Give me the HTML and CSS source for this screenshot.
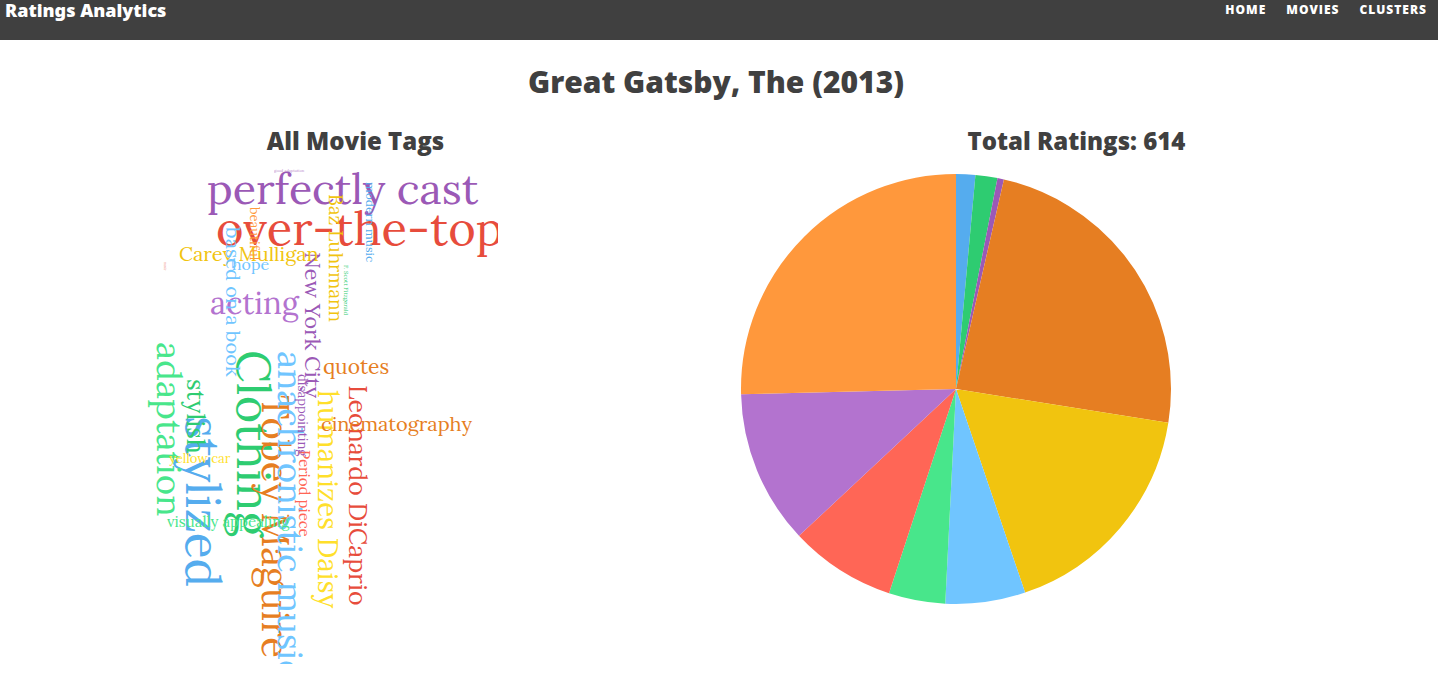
FILE: index.html
```html
<!DOCTYPE html>
<html lang="en">
<head>
<meta charset="utf-8">
<title>Ratings Analytics</title>
<link rel="stylesheet" href="styles.css">
</head>
<body>
<header class="topbar">
  <a class="brand" href="#">Ratings Analytics</a>
  <nav class="nav">
    <a href="#">HOME</a>
    <a href="#">MOVIES</a>
    <a href="#">CLUSTERS</a>
  </nav>
</header>
<main class="page">
  <h1 class="movie-title">Great Gatsby, The (2013)</h1>
  <div class="panels">
    <section class="panel">
      <h2 class="panel-title">All Movie Tags</h2>
      <svg class="cloud" width="358" height="500" viewBox="140 164 358 500">
        <text class="purple" x="207" y="204" font-size="43">perfectly cast</text>
        <text class="red" x="216" y="245" font-size="47">over-the-top</text>
        <text class="green" transform="translate(237 350) rotate(90)" font-size="47">Clothing</text>
        <text class="blue" transform="translate(186 416) rotate(90)" font-size="48">stylized</text>
        <text class="orange" transform="translate(262 395) rotate(90)" font-size="38">Tobey Maguire</text>
        <text class="sky" transform="translate(278 351) rotate(90)" font-size="35">anachronistic music</text>
        <text class="mint" transform="translate(157 342) rotate(90)" font-size="35">adaptation</text>
        <text class="lilac" x="210" y="314" font-size="31">acting</text>
        <text class="yellow" transform="translate(318 390) rotate(90)" font-size="28">humanizes Daisy</text>
        <text class="red" transform="translate(349 385) rotate(90)" font-size="25">Leonardo DiCaprio</text>
        <text class="green" transform="translate(187 379) rotate(90)" font-size="25">stylish</text>
        <text class="orange" x="323" y="374" font-size="21">quotes</text>
        <text class="purple" transform="translate(305 252) rotate(90)" font-size="22">New York City</text>
        <text class="orange" x="321" y="431" font-size="20">cinematography</text>
        <text class="gold" x="179" y="261" font-size="20">Carey Mulligan</text>
        <text class="gold" transform="translate(329 194) rotate(90)" font-size="19">Baz Luhrmann</text>
        <text class="tangerine" transform="translate(250 207) rotate(90)" font-size="13">beautiful</text>
        <text class="sky" x="232" y="270" font-size="16">hope</text>
        <text class="sky" transform="translate(226 227) rotate(90)" font-size="20">based on a book</text>
        <text class="coral" transform="translate(299 450) rotate(90)" font-size="15">Period piece</text>
        <text class="mint" x="167" y="527" font-size="15">visually appealing</text>
        <text class="purple" transform="translate(298 374) rotate(90)" font-size="13">disappointing</text>
        <text class="yellow" x="169" y="463" font-size="13">yellow car</text>
        <text class="blue" transform="translate(366 182) rotate(90)" font-size="12">modern music</text>
        <text class="green" transform="translate(344 265) rotate(90)" font-size="6">F. Scott Fitzgerald</text>
        <text class="purple faint" x="274" y="172" font-size="4">good adaptation</text>
        <text class="red faint" transform="translate(164 262) rotate(90)" font-size="3">music</text>
      </svg>
    </section>
    <section class="panel">
      <h2 class="panel-title">Total Ratings: 614</h2>
      <svg class="pie" width="430" height="430" viewBox="0 0 430 430">
        <g class="slices" transform="rotate(-90 215 215)">
          <circle class="s-blue" cx="215" cy="215" r="107.5" pathLength="614" stroke-dasharray="9 605" stroke-dashoffset="0"/>
          <circle class="s-green" cx="215" cy="215" r="107.5" pathLength="614" stroke-dasharray="10 604" stroke-dashoffset="-9"/>
          <circle class="s-purple" cx="215" cy="215" r="107.5" pathLength="614" stroke-dasharray="3 611" stroke-dashoffset="-19"/>
          <circle class="s-orange" cx="215" cy="215" r="107.5" pathLength="614" stroke-dasharray="147 467" stroke-dashoffset="-22"/>
          <circle class="s-gold" cx="215" cy="215" r="107.5" pathLength="614" stroke-dasharray="106 508" stroke-dashoffset="-169"/>
          <circle class="s-sky" cx="215" cy="215" r="107.5" pathLength="614" stroke-dasharray="37 577" stroke-dashoffset="-275"/>
          <circle class="s-mint" cx="215" cy="215" r="107.5" pathLength="614" stroke-dasharray="26 588" stroke-dashoffset="-312"/>
          <circle class="s-coral" cx="215" cy="215" r="107.5" pathLength="614" stroke-dasharray="49 565" stroke-dashoffset="-338"/>
          <circle class="s-lilac" cx="215" cy="215" r="107.5" pathLength="614" stroke-dasharray="71 543" stroke-dashoffset="-387"/>
          <circle class="s-tangerine" cx="215" cy="215" r="107.5" pathLength="614" stroke-dasharray="156 458" stroke-dashoffset="-458"/>
        </g>
      </svg>
    </section>
  </div>
</main>
</body>
</html>
```
FILE: styles.css
```css
* { box-sizing: border-box; }
body {
  margin: 0;
  background: #fff;
  color: #404040;
  font-family: "Open Sans", sans-serif;
}
.topbar {
  display: flex;
  justify-content: space-between;
  align-items: flex-start;
  height: 40px;
  padding: 0 11px 0 5px;
  background: #404040;
}
.topbar a { color: #fff; text-decoration: none; }
.brand {
  font-family: "Noto Sans", sans-serif;
  font-size: 18px;
  font-weight: 900;
  line-height: 20px;
}
.nav {
  display: flex;
  gap: 20px;
  font-size: 12px;
  font-weight: 800;
  line-height: 20px;
  letter-spacing: 1px;
}
.page { padding: 20px 6px 0 0; }
.movie-title {
  margin: 0;
  text-align: center;
  font-size: 30px;
  font-weight: 800;
  line-height: 44px;
}
.panels {
  display: grid;
  grid-template-columns: 1fr 1fr;
  gap: 10px;
  margin-top: 20px;
}
.panel-title {
  margin: 0;
  text-align: center;
  font-size: 24px;
  font-weight: 800;
  line-height: 34px;
}
.panel { display: flex; flex-direction: column; }
.cloud { margin: 6px 0 0 140px; font-family: Lora, "Liberation Serif", serif; }
.pie { margin: 16px 0 0 20px; }
.purple { fill: #9b59b6; }
.red { fill: #e74c3c; }
.green { fill: #2ecc71; }
.blue { fill: #55acee; }
.orange { fill: #e67e22; }
.sky { fill: #70c5ff; }
.mint { fill: #48e68b; }
.lilac { fill: #b373cf; }
.yellow { fill: #ffdf2b; }
.gold { fill: #f1c40f; }
.tangerine { fill: #ff983c; }
.coral { fill: #ff6656; }
.faint { opacity: 0.7; }
.slices circle { fill: none; stroke-width: 215px; }
.s-blue { stroke: #55acee; }
.s-green { stroke: #2ecc71; }
.s-purple { stroke: #9b59b6; }
.s-orange { stroke: #e67e22; }
.s-gold { stroke: #f1c40f; }
.s-sky { stroke: #70c5ff; }
.s-mint { stroke: #48e68b; }
.s-coral { stroke: #ff6656; }
.s-lilac { stroke: #b373cf; }
.s-tangerine { stroke: #ff983c; }
```
